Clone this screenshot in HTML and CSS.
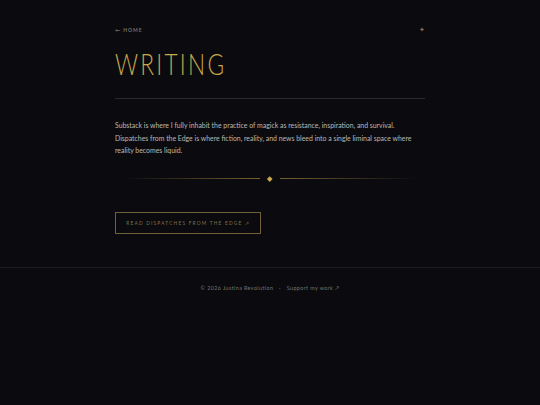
FILE: index.html
```html
<!DOCTYPE html>
<html lang="en">
<head>
<meta charset="utf-8">
<title>Writing</title>
<link rel="stylesheet" href="styles.css">
</head>
<body>
<main class="page">
  <nav class="topnav">
    <a class="back" href="#">← HOME</a>
    <span class="star">✦</span>
  </nav>
  <h1 class="title">WRITING</h1>
  <hr class="rule">
  <p class="intro">Substack is where I fully inhabit the practice of magick as resistance, inspiration, and survival. Dispatches from the Edge is where fiction, reality, and news bleed into a single liminal space where reality becomes liquid.</p>
  <div class="divider">
    <span class="line left"></span>
    <span class="diamond"></span>
    <span class="line right"></span>
  </div>
  <a class="cta" href="#">READ DISPATCHES FROM THE EDGE ↗</a>
</main>
<footer class="footer">
  <span>© 2026 Justina Revolution</span>
  <span class="sep">·</span>
  <a href="#">Support my work ↗</a>
</footer>
</body>
</html>
```
FILE: styles.css
```css
html, body {
  margin: 0;
  padding: 0;
  background: #0b0b0f;
  color: #b9b6ae;
  font-family: Lato, "Noto Sans", sans-serif;
}
body { min-height: 405px; }
a { text-decoration: none; color: inherit; }
.page {
  width: 310px;
  margin: 0 auto;
  padding-top: 26px;
  padding-bottom: 33px;
}
.topnav {
  display: flex;
  justify-content: space-between;
  align-items: center;
  height: 8px;
}
.back {
  font-size: 5px;
  letter-spacing: 1px;
  color: #75726c;
  font-weight: 700;
}
.star {
  font-size: 6.5px;
  line-height: 8px;
  color: #7d7150;
}
.title {
  margin: 14px 0 0;
  font-family: Lato, sans-serif;
  font-weight: 300;
  font-size: 30px;
  line-height: 30px;
  letter-spacing: 3px;
  color: #c9a84c;
  transform: scaleX(0.755);
  transform-origin: left center;
}
.rule {
  margin: 20px 0 0;
  border: 0;
  height: 1px;
  background: #2a2a2c;
}
.intro {
  margin: 20px 0 0;
  font-size: 6.9px;
  line-height: 12.6px;
  font-weight: 400;
  color: #bbb8b1;
}
.divider {
  display: flex;
  align-items: center;
  margin-top: 17px;
  height: 10px;
  gap: 6px;
  padding: 0 8px;
}
.line { flex: 1; height: 1px; }
.line.left { background: linear-gradient(to right, rgba(201,168,76,0), rgba(201,168,76,0.55)); }
.line.right { background: linear-gradient(to left, rgba(201,168,76,0), rgba(201,168,76,0.55)); }
.diamond {
  width: 3.5px;
  height: 3.5px;
  background: #c9a84c;
  transform: rotate(45deg);
  margin: 0 2px;
}
.cta {
  display: inline-block;
  margin-top: 28px;
  width: 144px;
  height: 20px;
  line-height: 20px;
  border: 1px solid #6f603a;
  text-align: center;
  font-size: 4.8px;
  letter-spacing: 1.2px;
  color: #7f7047;
  box-sizing: content-box;
}
.footer {
  border-top: 1px solid #1d1d21;
  padding-top: 17px;
  text-align: center;
  font-size: 5.4px;
  letter-spacing: 0.4px;
  color: #75736e;
}
.footer .sep { margin: 0 4px; }
```
